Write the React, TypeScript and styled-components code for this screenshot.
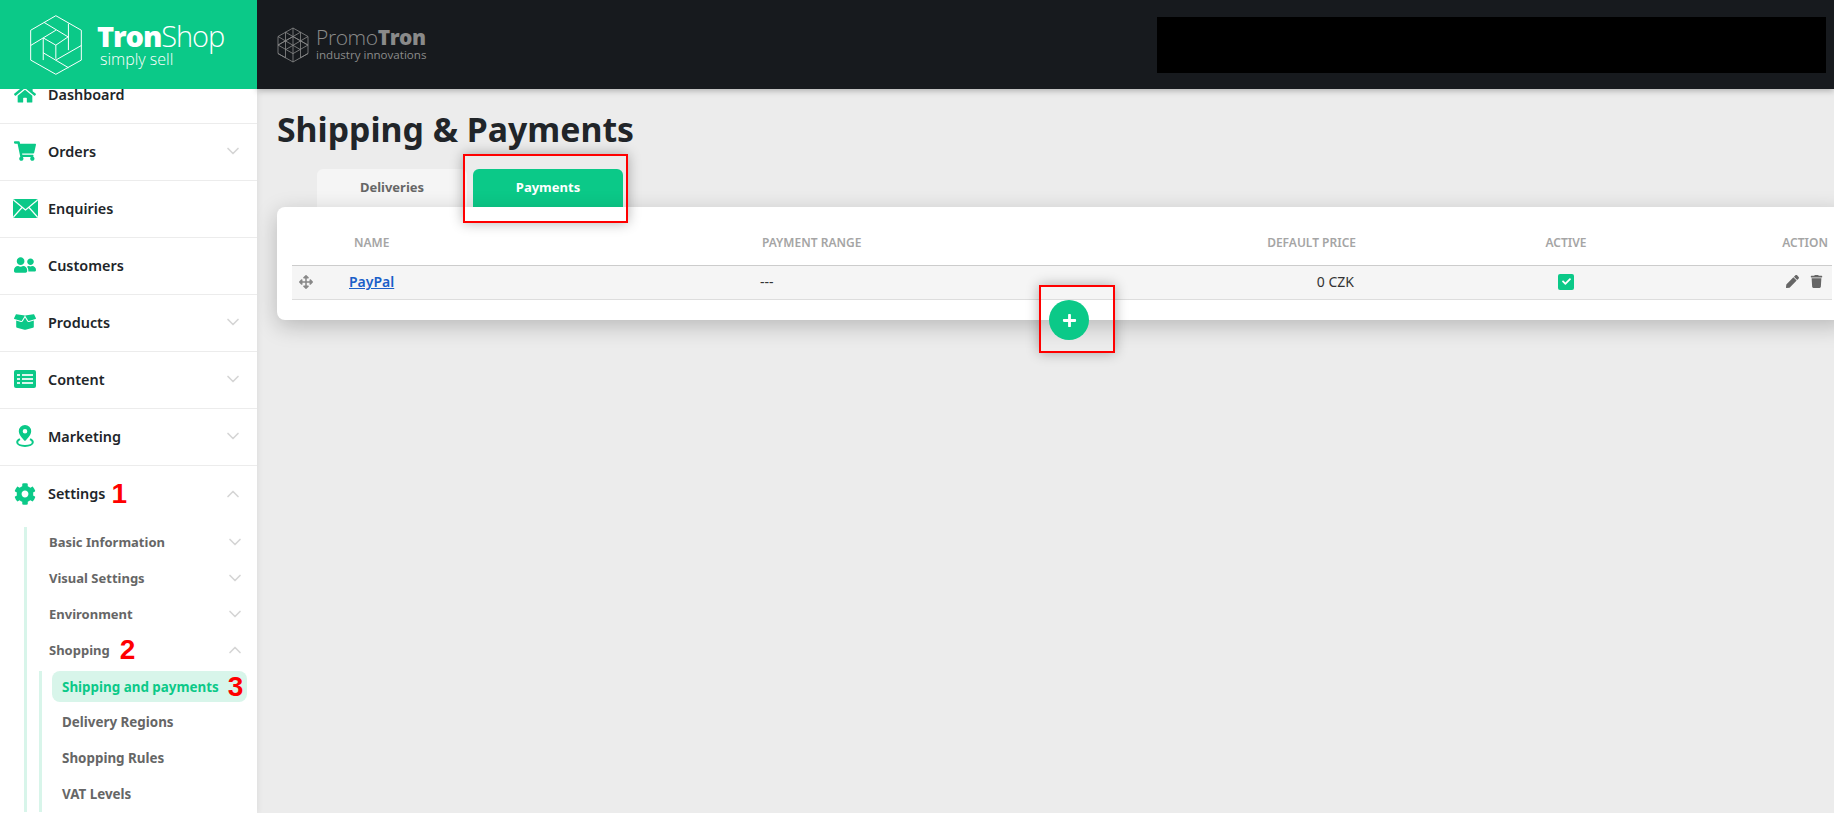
import React from "react";
import styled, { createGlobalStyle } from "styled-components";
import {
  FaHome,
  FaShoppingCart,
  FaUserFriends,
  FaBoxOpen,
  FaCog,
  FaArrowsAlt,
  FaPen,
  FaTrash,
  FaCheck,
  FaPlus,
} from "react-icons/fa";
import { FiChevronDown, FiChevronUp } from "react-icons/fi";

const GREEN = "#0bc988";
const FONT = `"Noto Sans", "Open Sans", sans-serif`;

const Global = createGlobalStyle`
  html, body { margin: 0; padding: 0; height: 100%; overflow: hidden; background: #ececec; }
  body { font-family: ${FONT}; color: #212529; }
  * { box-sizing: border-box; }
`;

const Page = styled.div`
  display: grid;
  grid-template-columns: 257px 1fr;
  grid-template-rows: 89px 1fr;
  width: 100vw;
  height: 100vh;
`;

const Brand = styled.div`
  background: ${GREEN};
  display: flex;
  align-items: center;
  padding-left: 30px;
  gap: 15px;
  z-index: 3;
`;

const BrandText = styled.div`
  display: flex;
  flex-direction: column;
  color: #fff;
  font-family: "Open Sans", sans-serif;
`;

const BrandName = styled.div`
  font-size: 29px;
  line-height: 28px;
  font-weight: 300;
  letter-spacing: -1.1px;
  b { font-weight: 800; }
`;

const BrandTag = styled.div`
  font-size: 16px;
  line-height: 18px;
  font-weight: 300;
  margin-left: 3px;
`;

const Topbar = styled.header`
  background: #171a1e;
  display: flex;
  align-items: center;
  justify-content: space-between;
  padding: 0 8px 0 20px;
  box-shadow: 0 2px 6px rgba(0, 0, 0, 0.25);
  z-index: 2;
`;

const Promo = styled.div`
  display: flex;
  align-items: center;
  gap: 7px;
  color: #8a8a8a;
`;

const PromoText = styled.div`
  display: flex;
  flex-direction: column;
  font-family: "Open Sans", sans-serif;
  margin-bottom: 1px;
`;

const PromoName = styled.div`
  font-size: 21px;
  line-height: 22px;
  font-weight: 300;
  letter-spacing: -0.4px;
  b { font-weight: 800; }
`;

const PromoTag = styled.div`
  font-size: 11.6px;
  line-height: 14px;
  font-weight: 400;
`;

const Redacted = styled.div`
  width: 669px;
  height: 56px;
  background: #000;
  margin-top: 1px;
`;

const Sidebar = styled.aside`
  background: #fff;
  overflow: hidden;
  z-index: 1;
  box-shadow: 2px 0 5px rgba(0, 0, 0, 0.05);
`;

/* list is scrolled a bit in the reference, Dashboard slides under the header */
const Nav = styled.nav`
  margin-top: -22px;
`;

const NavRow = styled.div<{ $open?: boolean }>`
  height: 57px;
  display: flex;
  align-items: center;
  padding: 0 14px 2px 14px;
  border-bottom: ${(p) => (p.$open ? "none" : "1px solid #ececec")};
  font-size: 14.4px;
  font-weight: 600;
  color: #212529;
`;

const NavIcon = styled.span`
  width: 22px;
  height: 22px;
  margin-right: 12px;
  color: ${GREEN};
  display: flex;
  align-items: center;
  justify-content: center;
  font-size: 22px;
  svg { flex-shrink: 0; }
`;

const Chevron = styled.span`
  margin-left: auto;
  display: flex;
  color: #d5d5d5;
  font-size: 20px;
`;

const Mark = styled.span<{ $gap?: number }>`
  font-family: "Liberation Sans", sans-serif;
  font-weight: 700;
  font-size: 28px;
  line-height: 20px;
  color: #f00;
  margin-left: ${(p) => p.$gap ?? 6}px;
`;

const SubList = styled.div`
  margin: 4px 0 0 24px;
  border-left: 3px solid #d8f5ea;
  padding-right: 10px;
`;

const SubRow = styled.div`
  height: 30px;
  margin-bottom: 6px;
  display: flex;
  align-items: center;
  padding: 0 2px 0 22px;
  font-size: 13px;
  font-weight: 700;
  color: #666;
`;

const NestedList = styled.div`
  margin-left: 12px;
  border-left: 3px solid #d8f5ea;
  padding-left: 10px;
  display: flex;
  flex-direction: column;
`;

const NestedRow = styled.div<{ $active?: boolean }>`
  height: ${(p) => (p.$active ? 31 : 36)}px;
  margin-bottom: ${(p) => (p.$active ? 2 : 0)}px;
  display: flex;
  align-items: center;
  padding-left: 10px;
  border-radius: 8px;
  font-size: 13.4px;
  font-weight: 700;
  color: ${(p) => (p.$active ? GREEN : "#666")};
  background: ${(p) => (p.$active ? "#d8f5ea" : "transparent")};
`;

const Main = styled.main`
  position: relative;
  overflow: hidden;
  padding: 16px 0 0 20px;
`;

const Title = styled.h1`
  margin: 0 0 16px;
  font-size: 33.8px;
  line-height: 48px;
  font-weight: 700;
  color: #212529;
`;

const Tabs = styled.div`
  display: flex;
  gap: 6px;
  margin-left: 40px;
`;

const Tab = styled.div<{ $active?: boolean }>`
  width: 150px;
  height: 38px;
  display: flex;
  align-items: center;
  justify-content: center;
  border-radius: 6px 6px 0 0;
  font-size: 13px;
  font-weight: 700;
  padding-bottom: 2px;
  color: ${(p) => (p.$active ? "#fff" : "#666")};
  background: ${(p) => (p.$active ? GREEN : "#f5f5f5")};
`;

const Card = styled.section`
  position: relative;
  width: 1570px;
  height: 113px;
  padding: 0 15px;
  background: #fff;
  border-radius: 8px;
  box-shadow: 0 6px 22px rgba(0, 0, 0, 0.22);
`;

const Columns = styled.div`
  display: grid;
  grid-template-columns: 57px 411px 300px 300px 412px 60px;
  align-items: center;
`;

const HeadRow = styled(Columns)`
  height: 58px;
  padding-top: 12px;
  font-size: 12px;
  font-weight: 600;
  color: #a5a5a5;
  text-transform: uppercase;
`;

const BodyRow = styled(Columns)`
  height: 35px;
  padding-bottom: 2px;
  background: #f5f5f5;
  border-top: 1px solid #ccc;
  border-bottom: 1px solid #ddd;
  font-size: 14px;
  color: #333;
`;

const Cell = styled.div<{ $align?: string; $inset?: number }>`
  display: flex;
  align-items: center;
  justify-content: ${(p) => p.$align ?? "flex-start"};
  padding-left: ${(p) => p.$inset ?? 0}px;
`;

const RightCell = styled(Cell)<{ $pad?: number }>`
  padding-right: ${(p) => p.$pad ?? 4}px;
`;

const Handle = styled(Cell)`
  padding-left: 7px;
  color: #888;
  font-size: 14px;
`;

const PayLink = styled.a`
  color: #1a5fc8;
  font-weight: 600;
  text-decoration: underline;
`;

const CheckBox = styled.span`
  width: 16px;
  height: 16px;
  border-radius: 2px;
  background: ${GREEN};
  color: #fff;
  display: flex;
  align-items: center;
  justify-content: center;
  font-size: 9px;
`;

const ActionIcons = styled.div`
  display: flex;
  gap: 11px;
  color: #666;
  font-size: 13px;
`;

const AddButton = styled.button`
  position: absolute;
  left: 772px;
  bottom: -20px;
  width: 40px;
  height: 40px;
  padding: 0;
  border: 0;
  border-radius: 50%;
  background: ${GREEN};
  color: #fff;
  font-size: 15px;
  display: flex;
  align-items: center;
  justify-content: center;
  z-index: 2;
`;

/* red boxes drawn over the screenshot */
const Callout = styled.div<{ $l: number; $t: number; $w: number; $h: number }>`
  position: absolute;
  left: ${(p) => p.$l}px;
  top: ${(p) => p.$t}px;
  width: ${(p) => p.$w}px;
  height: ${(p) => p.$h}px;
  border: 2px solid #f00;
  box-shadow: 0 0 12px rgba(0, 0, 0, 0.3);
  z-index: 3;
`;

const TronLogo = () => (
  <svg width="52" height="60" viewBox="30 26 157 181" fill="none" stroke="#fff" strokeWidth="3">
    <path d="M108 28L185 72V162L108 205L32 162V72Z" />
    <path d="M72 48L145 92L108 117L70 95L108 72" />
    <path d="M146 52V132M185 118L108 162M108 117V158M70 95L32 118M70 95V162M70 140L146 185" />
  </svg>
);

const PromoLogo = () => (
  <svg width="32" height="36" viewBox="0 0 32 36" fill="none" stroke="#8a8a8a" strokeWidth="0.8">
    <path d="M16 1L31 9.5V26.5L16 35L1 26.5V9.5Z" />
    <path d="M8.5 5.2V30.8M16 1V35M23.5 5.2V30.8" />
    <path d="M1 9.5L23.5 22.7M1 18L16 26.6M8.5 5.2L31 18.2M16 9.5L31 18M1 26.5L8.5 30.8" />
    <path d="M31 9.5L8.5 22.7M31 18L16 26.6M23.5 5.2L1 18.2M16 9.5L1 18M31 26.5L23.5 30.8" />
  </svg>
);

const MailIcon = () => (
  <svg width="25" height="19" viewBox="0 0 25 19">
    <rect width="25" height="19" rx="2" fill={GREEN} />
    <path d="M0.5 1L12.5 11L24.5 1M0.5 18L9 8.5M24.5 18L16 8.5" fill="none" stroke="#fff" strokeWidth="1.2" />
  </svg>
);

const ContentIcon = () => (
  <svg width="22" height="18" viewBox="0 0 22 18">
    <rect width="22" height="18" rx="2" fill={GREEN} />
    <path d="M3 5H6M8 5H19M3 9H6M8 9H19M3 13H6M8 13H19" stroke="#fff" strokeWidth="2" opacity="0.85" />
  </svg>
);

const PinIcon = () => (
  <svg width="18" height="22" viewBox="0 0 18 22">
    <path fillRule="evenodd" fill={GREEN} d="M9 0a6.2 6.2 0 0 0-6.2 6.2C2.8 10.6 9 16 9 16s6.2-5.4 6.2-9.8A6.2 6.2 0 0 0 9 0Zm0 8.6a2.3 2.3 0 1 1 0-4.6 2.3 2.3 0 0 1 0 4.6Z" />
    <path d="M4 14.2C2.2 15 1.2 16 1.2 17.2c0 2.2 3.5 3.7 7.8 3.7s7.8-1.5 7.8-3.7c0-1.2-1-2.2-2.8-3" fill="none" stroke={GREEN} strokeWidth="2" />
  </svg>
);

const mainMenu = [
  { name: "Dashboard", icon: <FaHome />, more: false },
  { name: "Orders", icon: <FaShoppingCart />, more: true },
  { name: "Enquiries", icon: <MailIcon />, more: false },
  { name: "Customers", icon: <FaUserFriends />, more: false },
  { name: "Products", icon: <FaBoxOpen />, more: true },
  { name: "Content", icon: <ContentIcon />, more: true },
  { name: "Marketing", icon: <PinIcon />, more: true },
];

const settingsMenu = ["Basic Information", "Visual Settings", "Environment"];
const shoppingMenu = ["Delivery Regions", "Shopping Rules", "VAT Levels"];

export default function App() {
  return (
    <Page>
      <Global />
      <Brand>
        <TronLogo />
        <BrandText>
          <BrandName>
            <b>Tron</b>Shop
          </BrandName>
          <BrandTag>simply sell</BrandTag>
        </BrandText>
      </Brand>
      <Topbar>
        <Promo>
          <PromoLogo />
          <PromoText>
            <PromoName>
              Promo<b>Tron</b>
            </PromoName>
            <PromoTag>industry innovations</PromoTag>
          </PromoText>
        </Promo>
        <Redacted />
      </Topbar>

      <Sidebar>
        <Nav>
          {mainMenu.map((item) => (
            <NavRow key={item.name}>
              <NavIcon>{item.icon}</NavIcon>
              {item.name}
              {item.more && (
                <Chevron>
                  <FiChevronDown />
                </Chevron>
              )}
            </NavRow>
          ))}
          <NavRow $open>
            <NavIcon>
              <FaCog />
            </NavIcon>
            Settings
            <Mark>1</Mark>
            <Chevron>
              <FiChevronUp />
            </Chevron>
          </NavRow>
          <SubList>
            {settingsMenu.map((name) => (
              <SubRow key={name}>
                {name}
                <Chevron>
                  <FiChevronDown />
                </Chevron>
              </SubRow>
            ))}
            <SubRow>
              Shopping
              <Mark $gap={10}>2</Mark>
              <Chevron>
                <FiChevronUp />
              </Chevron>
            </SubRow>
            <NestedList>
              <NestedRow $active>
                Shipping and payments
                <Mark $gap={9}>3</Mark>
              </NestedRow>
              {shoppingMenu.map((name) => (
                <NestedRow key={name}>{name}</NestedRow>
              ))}
            </NestedList>
          </SubList>
        </Nav>
      </Sidebar>

      <Main>
        <Title>Shipping &amp; Payments</Title>
        <Tabs>
          <Tab>Deliveries</Tab>
          <Tab $active>Payments</Tab>
        </Tabs>
        <Card>
          <HeadRow>
            <Cell />
            <Cell $inset={5}>Name</Cell>
            <Cell $inset={2}>Payment range</Cell>
            <RightCell $align="flex-end">Default price</RightCell>
            <Cell $align="center">Active</Cell>
            <RightCell $align="flex-end">Action</RightCell>
          </HeadRow>
          <BodyRow>
            <Handle>
              <FaArrowsAlt />
            </Handle>
            <Cell>
              <PayLink href="#">PayPal</PayLink>
            </Cell>
            <Cell>---</Cell>
            <RightCell $align="flex-end" $pad={6}>0 CZK</RightCell>
            <Cell $align="center">
              <CheckBox>
                <FaCheck />
              </CheckBox>
            </Cell>
            <RightCell $align="flex-end" $pad={9}>
              <ActionIcons>
                <FaPen />
                <FaTrash />
              </ActionIcons>
            </RightCell>
          </BodyRow>
          <AddButton>
            <FaPlus />
          </AddButton>
        </Card>
        <Callout $l={206} $t={65} $w={165} $h={69} />
        <Callout $l={782} $t={196} $w={76} $h={68} />
      </Main>
    </Page>
  );
}
